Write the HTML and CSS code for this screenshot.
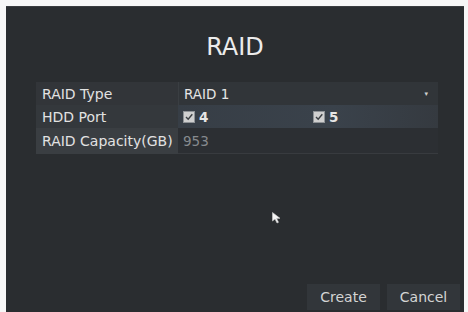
FILE: index.html
```html
<!DOCTYPE html>
<html>
<head>
<meta charset="utf-8">
<link rel="stylesheet" href="styles.css">
</head>
<body>
<div class="panel">
  <div class="title">RAID</div>
  <div class="table">
    <div class="row r1">
      <div class="label">RAID Type</div>
      <div class="value sel"><span>RAID 1</span><span class="caret">&#9662;</span></div>
    </div>
    <div class="row r2">
      <div class="label">HDD Port</div>
      <div class="value ports">
        <span class="port"><span class="cb"><svg width="10" height="10" viewBox="0 0 10 10"><path d="M2 5 L4.2 7.3 L8.3 2.3" fill="none" stroke="#3a3e42" stroke-width="1.4"/></svg></span>4</span>
        <span class="port"><span class="cb"><svg width="10" height="10" viewBox="0 0 10 10"><path d="M2 5 L4.2 7.3 L8.3 2.3" fill="none" stroke="#3a3e42" stroke-width="1.4"/></svg></span>5</span>
      </div>
    </div>
    <div class="row r3">
      <div class="label">RAID Capacity(GB)</div>
      <div class="value dim">953</div>
    </div>
  </div>
  <div class="spacer">
    <svg class="cursor" width="9" height="12" viewBox="0 0 9 12"><path d="M0.5 0.5 L0.5 9 L3 7 L5 11 L6.5 10.3 L4.6 6.5 L8 6.3 Z" fill="#f4f4f4" stroke="#cfcfcf" stroke-width="0.6"/></svg>
  </div>
  <div class="buttons">
    <div class="btn">Create</div>
    <div class="btn">Cancel</div>
  </div>
</div>
</body>
</html>
```
FILE: styles.css
```css
html, body {
  margin: 0;
  padding: 0;
  background: #f7f7f7;
}
body {
  width: 468px;
  height: 312px;
  overflow: hidden;
  font-family: "DejaVu Sans", sans-serif;
}
.panel {
  margin: 6px 4px 0 6px;
  height: 306px;
  background: #2a2d30;
  display: flex;
  flex-direction: column;
  box-sizing: border-box;
  padding: 0 0 2px 30px;
  border-top: 1px solid #3a3d40;
}
.title {
  color: #ececec;
  font-size: 24px;
  text-align: center;
  padding: 26px 0 0 0;
  box-sizing: border-box;
  height: 75px;
  margin-left: -30px;
}
.table {
  width: 402px;
  display: flex;
  flex-direction: column;
}
.row {
  display: flex;
  height: 23px;
  align-items: stretch;
}
.label {
  width: 142px;
  flex-shrink: 0;
  padding-left: 6px;
  box-sizing: border-box;
  color: #e2e2e2;
  font-size: 14px;
  display: flex;
  align-items: center;
  white-space: nowrap;
}
.value {
  flex: 1;
  min-width: 0;
  padding-left: 5px;
  color: #e6e6e6;
  font-size: 13.5px;
  display: flex;
  align-items: center;
}
.r1 .label { background: #323539; }
.r1 .value { background: #313539; border-left: 1px solid #3a3e42; }
.r2 .label { background: #34383c; }
.r2 .value { background: linear-gradient(to right, #373e46 0, #3a424b 60%, #353a40 100%); }
.r3 { height: 26px; }
.r3 .label { background: #3a3e42; }
.r3 .value { background: #2c2f33; border-bottom: 1px solid #383b3f; }
.sel { justify-content: space-between; padding-right: 10px; }
.caret { font-size: 7px; color: #cfcfcf; }
.port {
  width: 130px;
  flex-shrink: 0;
  display: flex;
  align-items: center;
  gap: 4px;
  font-weight: bold;
}
.port:last-child { width: auto; }
.cb {
  width: 10px;
  height: 10px;
  background: #cfcfcf;
  border: 1px solid #8e9296;
  display: flex;
  align-items: center;
  justify-content: center;
}
.dim { color: #868a8e; }
.spacer {
  flex: 1;
  position: relative;
}
.cursor {
  position: absolute;
  left: 236px;
  top: 58px;
}
.buttons {
  display: flex;
  justify-content: flex-end;
  gap: 7px;
  padding-right: 4px;
}
.btn {
  width: 73px;
  height: 26px;
  background: #32363a;
  color: #d4d4d4;
  font-size: 14px;
  display: flex;
  align-items: center;
  justify-content: center;
}
```
